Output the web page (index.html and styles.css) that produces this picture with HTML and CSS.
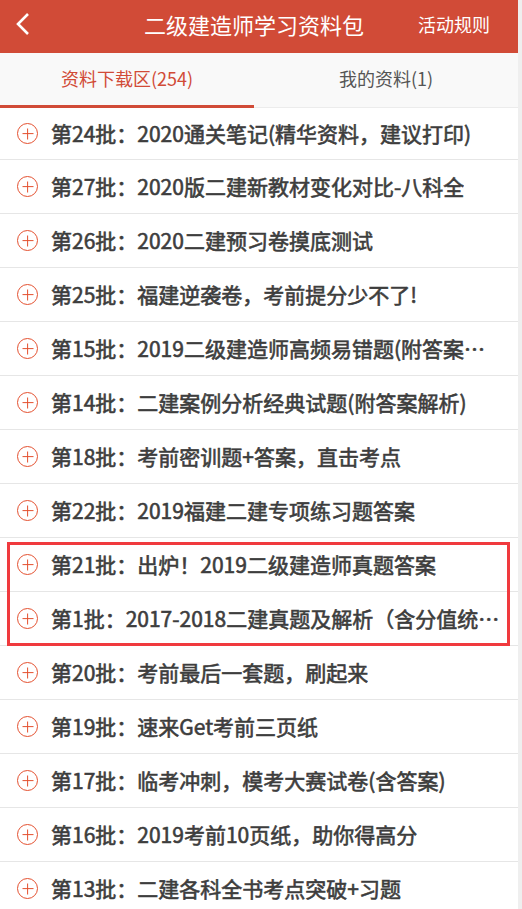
FILE: index.html
```html
<!DOCTYPE html>
<html lang="zh-CN">
<head>
    <meta charset="UTF-8">
    <meta name="viewport" content="width=device-width, initial-scale=1.0">
    <title>二级建造师学习资料包</title>
    <link rel="stylesheet" href="styles.css">
</head>
<body>
    <div class="page">
        <header class="topbar">
            <a class="back" href="#">
                <svg width="16" height="24" viewBox="0 0 16 24"><path d="M13 2 L3 12 L13 22" fill="none" stroke="#fff" stroke-width="2.6"/></svg>
            </a>
            <h1>二级建造师学习资料包</h1>
            <a class="rules" href="#">活动规则</a>
        </header>

        <nav class="tabs">
            <a href="#" class="tab active">资料下载区(254)</a>
            <a href="#" class="tab">我的资料(1)</a>
        </nav>

        <ul class="list">
            <li class="item"><span class="plus"></span><span class="title">第24批：2020通关笔记(精华资料，建议打印)</span></li>
            <li class="item"><span class="plus"></span><span class="title">第27批：2020版二建新教材变化对比-八科全</span></li>
            <li class="item"><span class="plus"></span><span class="title">第26批：2020二建预习卷摸底测试</span></li>
            <li class="item"><span class="plus"></span><span class="title">第25批：福建逆袭卷，考前提分少不了!</span></li>
            <li class="item"><span class="plus"></span><span class="title">第15批：2019二级建造师高频易错题(附答案详解)</span></li>
            <li class="item"><span class="plus"></span><span class="title">第14批：二建案例分析经典试题(附答案解析)</span></li>
            <li class="item"><span class="plus"></span><span class="title">第18批：考前密训题+答案，直击考点</span></li>
            <li class="item"><span class="plus"></span><span class="title">第22批：2019福建二建专项练习题答案</span></li>
            <li class="marked">
                <ul>
                    <li class="item"><span class="plus"></span><span class="title">第21批：出炉！2019二级建造师真题答案</span></li>
                    <li class="item"><span class="plus"></span><span class="title">第1批：2017-2018二建真题及解析（含分值统计）</span></li>
                </ul>
            </li>
            <li class="item"><span class="plus"></span><span class="title">第20批：考前最后一套题，刷起来</span></li>
            <li class="item"><span class="plus"></span><span class="title">第19批：速来Get考前三页纸</span></li>
            <li class="item"><span class="plus"></span><span class="title">第17批：临考冲刺，模考大赛试卷(含答案)</span></li>
            <li class="item"><span class="plus"></span><span class="title">第16批：2019考前10页纸，助你得高分</span></li>
            <li class="item"><span class="plus"></span><span class="title">第13批：二建各科全书考点突破+习题</span></li>
        </ul>
    </div>
</body>
</html>
```

FILE: styles.css
```css
body {
    margin: 0;
    padding: 0;
    background-color: #efefef;
    font-family: 'Noto Sans CJK SC', sans-serif;
    color: #3a3a3a;
    overflow: hidden;
}

.page {
    width: 518px;
    background-color: #fff;
    min-height: 909px;
}

.topbar {
    height: 53px;
    background-color: #d14b37;
    display: flex;
    align-items: center;
    color: white;
}

.back {
    width: 46px;
    display: flex;
    justify-content: center;
    padding-right: 4px;
    margin-top: -6px;
}

.topbar h1 {
    margin: 0;
    flex: 1;
    text-align: center;
    font-size: 22px;
    font-weight: normal;
    padding-left: 40px;
    margin-top: -6px;
}

.rules {
    color: white;
    text-decoration: none;
    font-size: 18px;
    padding-right: 28px;
    margin-top: -6px;
}

.tabs {
    display: flex;
    height: 55px;
    background-color: #f9f9f9;
    box-sizing: border-box;
    border-bottom: 1px solid #ececec;
}

.tab {
    flex: 1;
    display: flex;
    align-items: center;
    justify-content: center;
    padding-bottom: 2px;
    font-size: 18px;
    color: #555;
    text-decoration: none;
    border-bottom: 3px solid transparent;
    margin-bottom: -1px;
}

.tab.active {
    flex: 0 0 254px;
    color: #d14b37;
    border-bottom-color: #d14b37;
}

.list,
.marked ul {
    list-style: none;
    margin: 0;
    padding: 0;
}

.item {
    height: 53px;
    border-bottom: 1px solid #e6e6e6;
    display: flex;
    align-items: center;
    padding: 0 15px 0 17px;
}

.list > .item:first-child {
    height: 51px;
}

.marked {
    position: relative;
}

.marked::after {
    content: '';
    position: absolute;
    left: 7px;
    right: 8px;
    top: 4px;
    bottom: 0;
    border: 3px solid #f03a3e;
}

.plus {
    flex: none;
    width: 21px;
    height: 21px;
    border: 1.8px solid #e4502f;
    border-radius: 50%;
    box-sizing: border-box;
    position: relative;
    margin-right: 13px;
}

.plus::before,
.plus::after {
    content: '';
    position: absolute;
    background-color: #e4502f;
    left: 50%;
    top: 50%;
    transform: translate(-50%, -50%);
}

.plus::before {
    width: 11px;
    height: 1.8px;
}

.plus::after {
    width: 1.8px;
    height: 11px;
}

.title {
    font-size: 21px;
    color: #3d3d3d;
    -webkit-text-stroke: 0.6px #3d3d3d;
    white-space: nowrap;
    overflow: hidden;
    text-overflow: ellipsis;
    padding-bottom: 2px;
}
```
